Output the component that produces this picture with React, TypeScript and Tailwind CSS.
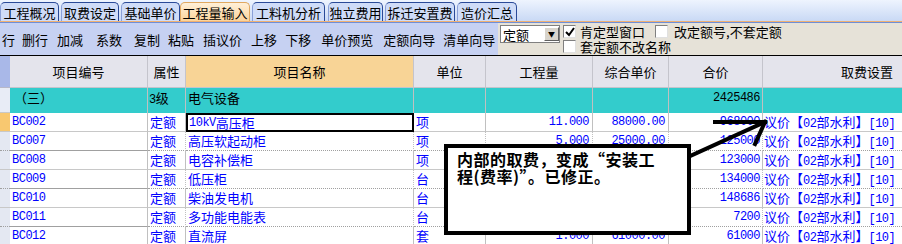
import React from "react";

const CJK = "font-['Noto_Sans_CJK_SC',sans-serif]";
const MONO = "font-['Liberation_Mono','Noto_Sans_CJK_SC',monospace] text-[12px] tracking-[-0.5px]";

const TABS = [
  { label: "工程概况", w: "w-[59px]", ml: "ml-0" },
  { label: "取费设定", w: "w-[58px]", ml: "ml-[2px]" },
  { label: "基础单价", w: "w-[59px]", ml: "ml-[2px]" },
  { label: "工程量输入", w: "w-[70px]", ml: "ml-0", active: true },
  { label: "工料机分析", w: "w-[73px]", ml: "ml-[2px]" },
  { label: "独立费用", w: "w-[55px]", ml: "ml-[3px]" },
  { label: "拆迁安置费", w: "w-[70px]", ml: "ml-[2px]" },
  { label: "造价汇总", w: "w-[60px]", ml: "ml-[2px]" },
];

const TOOLS = [
  { t: "行", ml: "ml-[2px]" },
  { t: "删行", ml: "ml-[7px]" },
  { t: "加减", ml: "ml-[9px]" },
  { t: "系数", ml: "ml-[13px]" },
  { t: "复制", ml: "ml-[12px]" },
  { t: "粘贴", ml: "ml-[8px]" },
  { t: "插议价", ml: "ml-[9px]" },
  { t: "上移", ml: "ml-[9px]" },
  { t: "下移", ml: "ml-[8px]" },
  { t: "单价预览", ml: "ml-[10px]" },
  { t: "定额向导", ml: "ml-[10px]" },
  { t: "清单向导", ml: "ml-[8px]" },
];

type Row = {
  code: string;
  name: React.ReactNode;
  unit: string;
  qty: string;
  price: string;
  total: string;
  line: "solid" | "dotted";
};

// qty / price of the middle rows sit under the note box, so they stay blank
const ROWS: Row[] = [
  { code: "BC002", name: <><span className={MONO}>10kV</span>高压柜</>, unit: "项", qty: "11.000", price: "88000.00", total: "968000", line: "solid" },
  { code: "BC007", name: "高压软起动柜", unit: "项", qty: "5.000", price: "25000.00", total: "125000", line: "dotted" },
  { code: "BC008", name: "电容补偿柜", unit: "项", qty: "", price: "", total: "123000", line: "solid" },
  { code: "BC009", name: "低压柜", unit: "台", qty: "", price: "", total: "134000", line: "dotted" },
  { code: "BC010", name: "柴油发电机", unit: "台", qty: "", price: "", total: "148686", line: "solid" },
  { code: "BC011", name: "多功能电能表", unit: "台", qty: "", price: "", total: "7200", line: "dotted" },
  { code: "BC012", name: "直流屏", unit: "套", qty: "1.000", price: "61000.00", total: "61000", line: "solid" },
];

function Check({ checked }: { checked?: boolean }) {
  return (
    <div className="w-[13px] h-[13px] bg-white border border-t-[#808080] border-l-[#808080] border-r-[#e0e0e0] border-b-[#e0e0e0] flex items-center justify-center">
      {checked && (
        <svg width="10" height="10" viewBox="0 0 10 10">
          <path d="M1 5 L4 8 L9 1" stroke="#000" strokeWidth="2" fill="none" />
        </svg>
      )}
    </div>
  );
}

function Fee() {
  return (
    <span className="text-[#0000ff] text-[13px] whitespace-nowrap">
      议价【<span className={MONO}>02</span>部水利】<span className={MONO}>[10]</span>
    </span>
  );
}

export default function App() {
  return (
    <div className={`relative w-[902px] h-[244px] overflow-hidden bg-white text-black ${CJK}`}>
      {/* tab bar */}
      <div className="h-[21px] bg-gradient-to-b from-[#eef4fe] to-[#c9d9f5] flex items-end">
        {TABS.map(tab => (
          <div
            key={tab.label}
            className={`${tab.w} ${tab.ml} h-[19px] rounded-t-[5px] border border-b-0 flex items-center justify-center text-[13px] leading-none ${
              tab.active
                ? "bg-gradient-to-b from-[#fff0d8] to-[#fbd39a] border-[#e0a860]"
                : "bg-[#cfdcf8] border-[#2a4a98] border-l-[#8aa0d8]"
            }`}
          >
            {tab.label}
          </div>
        ))}
      </div>
      <div className="h-[1px] bg-[#f0b070]" />
      <div className="h-[1px] bg-[#6f8fd8]" />

      {/* toolbar */}
      <div className="h-[32px] flex">
        <div className="w-[498px] bg-[#c6d1f2] flex items-center pt-[1px] text-[13px]">
          {TOOLS.map(b => (
            <span key={b.t} className={`${b.ml} leading-none whitespace-nowrap`}>{b.t}</span>
          ))}
        </div>
        <div className="flex-1 bg-[#e6e2d8] flex items-start">
          <div className="ml-[2px] mt-[2px] w-[60px] h-[18px] bg-white border border-[#808080] flex items-center">
            <span className="ml-[2px] text-[13px] leading-none flex-1">定额</span>
            <div className="w-[15px] h-[14px] bg-[#d8d4cc] border border-t-white border-l-white border-r-[#606060] border-b-[#606060] flex items-center justify-center text-[7px] leading-none">▼</div>
          </div>
          <div className="ml-[3px] mt-[2px] flex flex-col gap-[2px]">
            <div className="flex items-center h-[13px]">
              <Check checked />
              <span className="ml-[4px] text-[13px] leading-none">肯定型窗口</span>
              <div className="ml-[10px]"><Check /></div>
              <span className="ml-[6px] text-[13px] leading-none whitespace-nowrap">改定额号,不套定额</span>
            </div>
            <div className="flex items-center h-[13px]">
              <Check />
              <span className="ml-[4px] text-[13px] leading-none">套定额不改名称</span>
            </div>
          </div>
        </div>
      </div>

      {/* grid */}
      <div className="border-t border-black grid grid-cols-[10px_138px_38px_228px_72px_107px_76px_94px_139px] text-[13px]">
        {/* header */}
        <div className="h-[32px] bg-[#a9b8e8] border-b border-[#b8b8c8]" />
        <div className="h-[32px] bg-[#e4e4ec] border-r border-b border-[#c4c4cc] flex items-center justify-center">项目编号</div>
        <div className="h-[32px] bg-[#e4e4ec] border-r border-b border-[#c4c4cc] flex items-center justify-center">属性</div>
        <div className="h-[32px] bg-[#f8d496] border-r border-b border-[#c4c4cc] flex items-center justify-center">项目名称</div>
        <div className="h-[32px] bg-[#e4e4ec] border-r border-b border-[#c4c4cc] flex items-center justify-center">单位</div>
        <div className="h-[32px] bg-[#e4e4ec] border-r border-b border-[#c4c4cc] flex items-center justify-center">工程量</div>
        <div className="h-[32px] bg-[#e4e4ec] border-r border-b border-[#c4c4cc] flex items-center justify-center">综合单价</div>
        <div className="h-[32px] bg-[#e4e4ec] border-r border-b border-[#c4c4cc] flex items-center justify-center">合价</div>
        <div className="h-[32px] bg-[#e4e4ec] border-b border-[#c4c4cc] flex items-center justify-end pr-[9px]">取费设置</div>

        {/* level row */}
        <div className="h-[25px] bg-[#e8ecf6] border-b border-[#c8c8c8]" />
        <div className="h-[25px] bg-[#33cccc] border-r border-[#c0c0c0] pt-[2px] pl-[4px] leading-[16px]">（三）</div>
        <div className="h-[25px] bg-[#33cccc] border-r border-[#c0c0c0] pt-[2px] pl-[1px] leading-[16px]"><span className={MONO}>3</span>级</div>
        <div className="h-[25px] bg-[#33cccc] border-r border-[#c0c0c0] pt-[2px] pl-[2px] leading-[16px]">电气设备</div>
        <div className="h-[25px] bg-[#33cccc] border-r border-[#c0c0c0]" />
        <div className="h-[25px] bg-[#33cccc] border-r border-[#c0c0c0]" />
        <div className="h-[25px] bg-[#33cccc] border-r border-[#c0c0c0]" />
        <div className={`h-[25px] bg-[#33cccc] border-r border-[#c0c0c0] pt-[2px] pr-[2px] text-right leading-[16px] ${MONO}`}>2425486</div>
        <div className="h-[25px] bg-[#33cccc]" />

        {/* data rows */}
        {ROWS.map((r, i) => {
          const b = r.line === "dotted" ? "border-b border-dotted border-[#a0a0a0]" : "border-b border-[#c8c8c8]";
          const cell = `h-[19px] flex items-center ${b}`;
          return (
            <React.Fragment key={r.code}>
              <div className={`h-[19px] ${i === 0 ? "bg-[#f8c870]" : "bg-[#e4e8f2]"} ${b}`} />
              <div className={`${cell} border-r border-r-[#c0c0c0] border-solid pl-[2px] text-[#0000ff] ${MONO}`}>{r.code}</div>
              <div className={`${cell} border-r border-r-[#c0c0c0] pl-[2px] text-[#0000ff]`}>定额</div>
              {i === 0 ? (
                <div className="h-[19px] flex items-center border-2 border-black pl-[1px] text-[#0000ff]">{r.name}</div>
              ) : (
                <div className={`${cell} border-r border-r-[#c0c0c0] pl-[2px] text-[#0000ff]`}>{r.name}</div>
              )}
              <div className={`${cell} border-r border-r-[#c0c0c0] pl-[2px] text-[#0000ff]`}>{r.unit}</div>
              <div className={`${cell} border-r border-r-[#c0c0c0] justify-end pr-[3px] text-[#0000ff] ${MONO}`}>{r.qty}</div>
              <div className={`${cell} border-r border-r-[#c0c0c0] justify-end pr-[3px] text-[#0000ff] ${MONO}`}>{r.price}</div>
              <div className={`${cell} border-r border-r-[#c0c0c0] justify-end pr-[2px] text-[#0000ff] ${MONO}`}>{r.total}</div>
              <div className={`${cell} pl-[1px]`}><Fee /></div>
            </React.Fragment>
          );
        })}
      </div>

      {/* callout note */}
      <div className="absolute left-[444px] top-[144px] w-[247px] h-[91px] bg-white border-4 border-black pl-[9px] pt-[3px]">
        <div className="text-[16px] leading-[17px] font-bold tracking-[0.5px] whitespace-nowrap">
          内部的取费，变成“安装工<br />程(费率)”。已修正。
        </div>
      </div>

      {/* arrow */}
      <svg className="absolute left-0 top-0 pointer-events-none" width="902" height="244" viewBox="0 0 902 244">
        <g stroke="#000" strokeWidth="4" strokeLinecap="square" fill="none">
          <line x1="690" y1="156" x2="765" y2="122" />
          <line x1="715" y1="122" x2="765" y2="122" />
          <line x1="765" y1="122" x2="755" y2="144" />
        </g>
      </svg>
    </div>
  );
}
